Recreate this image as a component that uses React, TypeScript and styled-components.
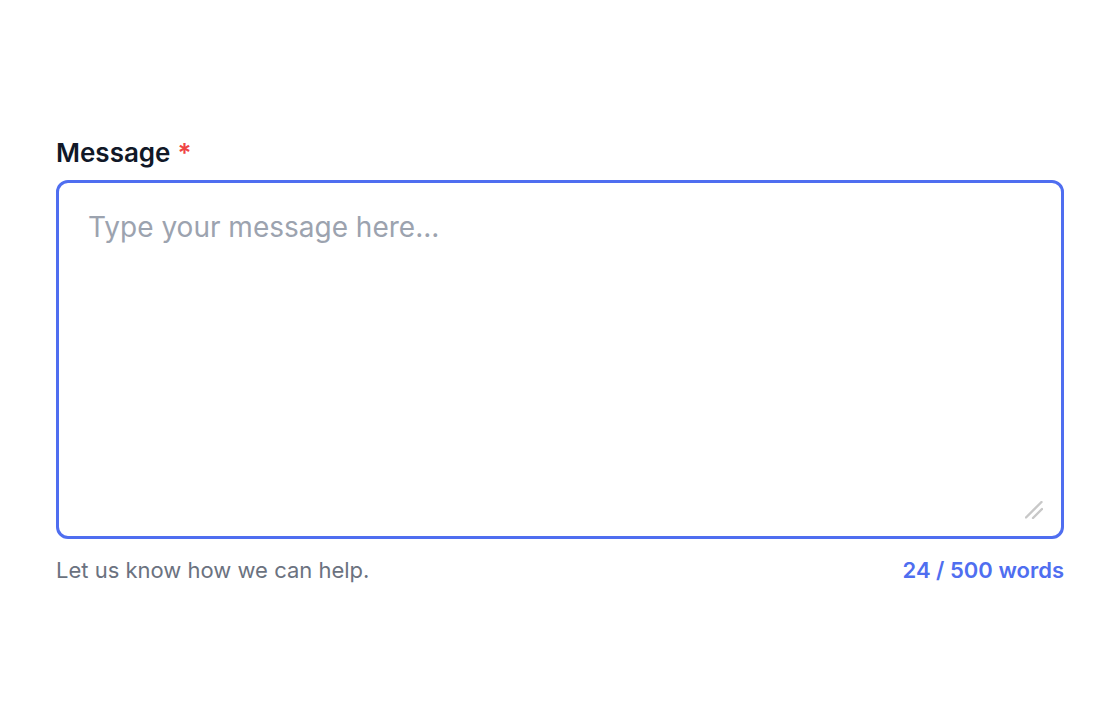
import React from "react";
import styled, { createGlobalStyle } from "styled-components";

const Global = createGlobalStyle`
  html, body { margin: 0; padding: 0; background: #ffffff; }
  body { font-family: Inter, "Noto Sans", sans-serif; }
  * { box-sizing: border-box; }
`;

const Page = styled.div`
  width: 1120px;
  height: 720px;
  padding: 134px 56px 0 56px;
`;

const Field = styled.div`
  display: flex;
  flex-direction: column;
`;

const Label = styled.label`
  font-size: 26px;
  line-height: 38px;
  font-weight: 600;
  color: #111827;
  margin-bottom: 8px;
`;

const Required = styled.span`
  color: #ef4444;
  margin-left: 7px;
`;

const InputWrap = styled.div`
  position: relative;
`;

const TextArea = styled.textarea`
  display: block;
  width: 100%;
  height: 359px;
  border: 3px solid #4f6ef0;
  border-radius: 12px;
  padding: 23px 29px;
  font-family: Inter, "Noto Sans", sans-serif;
  font-size: 28px;
  line-height: 42px;
  color: #111827;
  outline: none;
  resize: none;
  &::placeholder { color: #9ca3af; }
`;

const Grip = styled.svg`
  position: absolute;
  right: 21px;
  bottom: 20px;
  width: 18px;
  height: 18px;
  pointer-events: none;
`;

const Footer = styled.div`
  display: flex;
  justify-content: space-between;
  align-items: center;
  margin-top: 15px;
  font-size: 22px;
  line-height: 32px;
`;

const Hint = styled.span`
  color: #6b7280;
`;

const Counter = styled.span`
  color: #4f6ef0;
  font-weight: 600;
`;

export default function App() {
  return (
    <>
      <Global />
      <Page>
        <Field>
          <Label htmlFor="msg">
            Message<Required>*</Required>
          </Label>
          <InputWrap>
            <TextArea id="msg" placeholder="Type your message here..." />
            <Grip viewBox="0 0 18 18" aria-hidden="true">
              <line x1="1" y1="16.5" x2="16.5" y2="1" stroke="#c8c8c8" strokeWidth="2.4" strokeLinecap="round" />
              <line x1="8" y1="17" x2="17" y2="8" stroke="#c8c8c8" strokeWidth="2.4" strokeLinecap="round" />
            </Grip>
          </InputWrap>
          <Footer>
            <Hint>Let us know how we can help.</Hint>
            <Counter>24 / 500 words</Counter>
          </Footer>
        </Field>
      </Page>
    </>
  );
}
